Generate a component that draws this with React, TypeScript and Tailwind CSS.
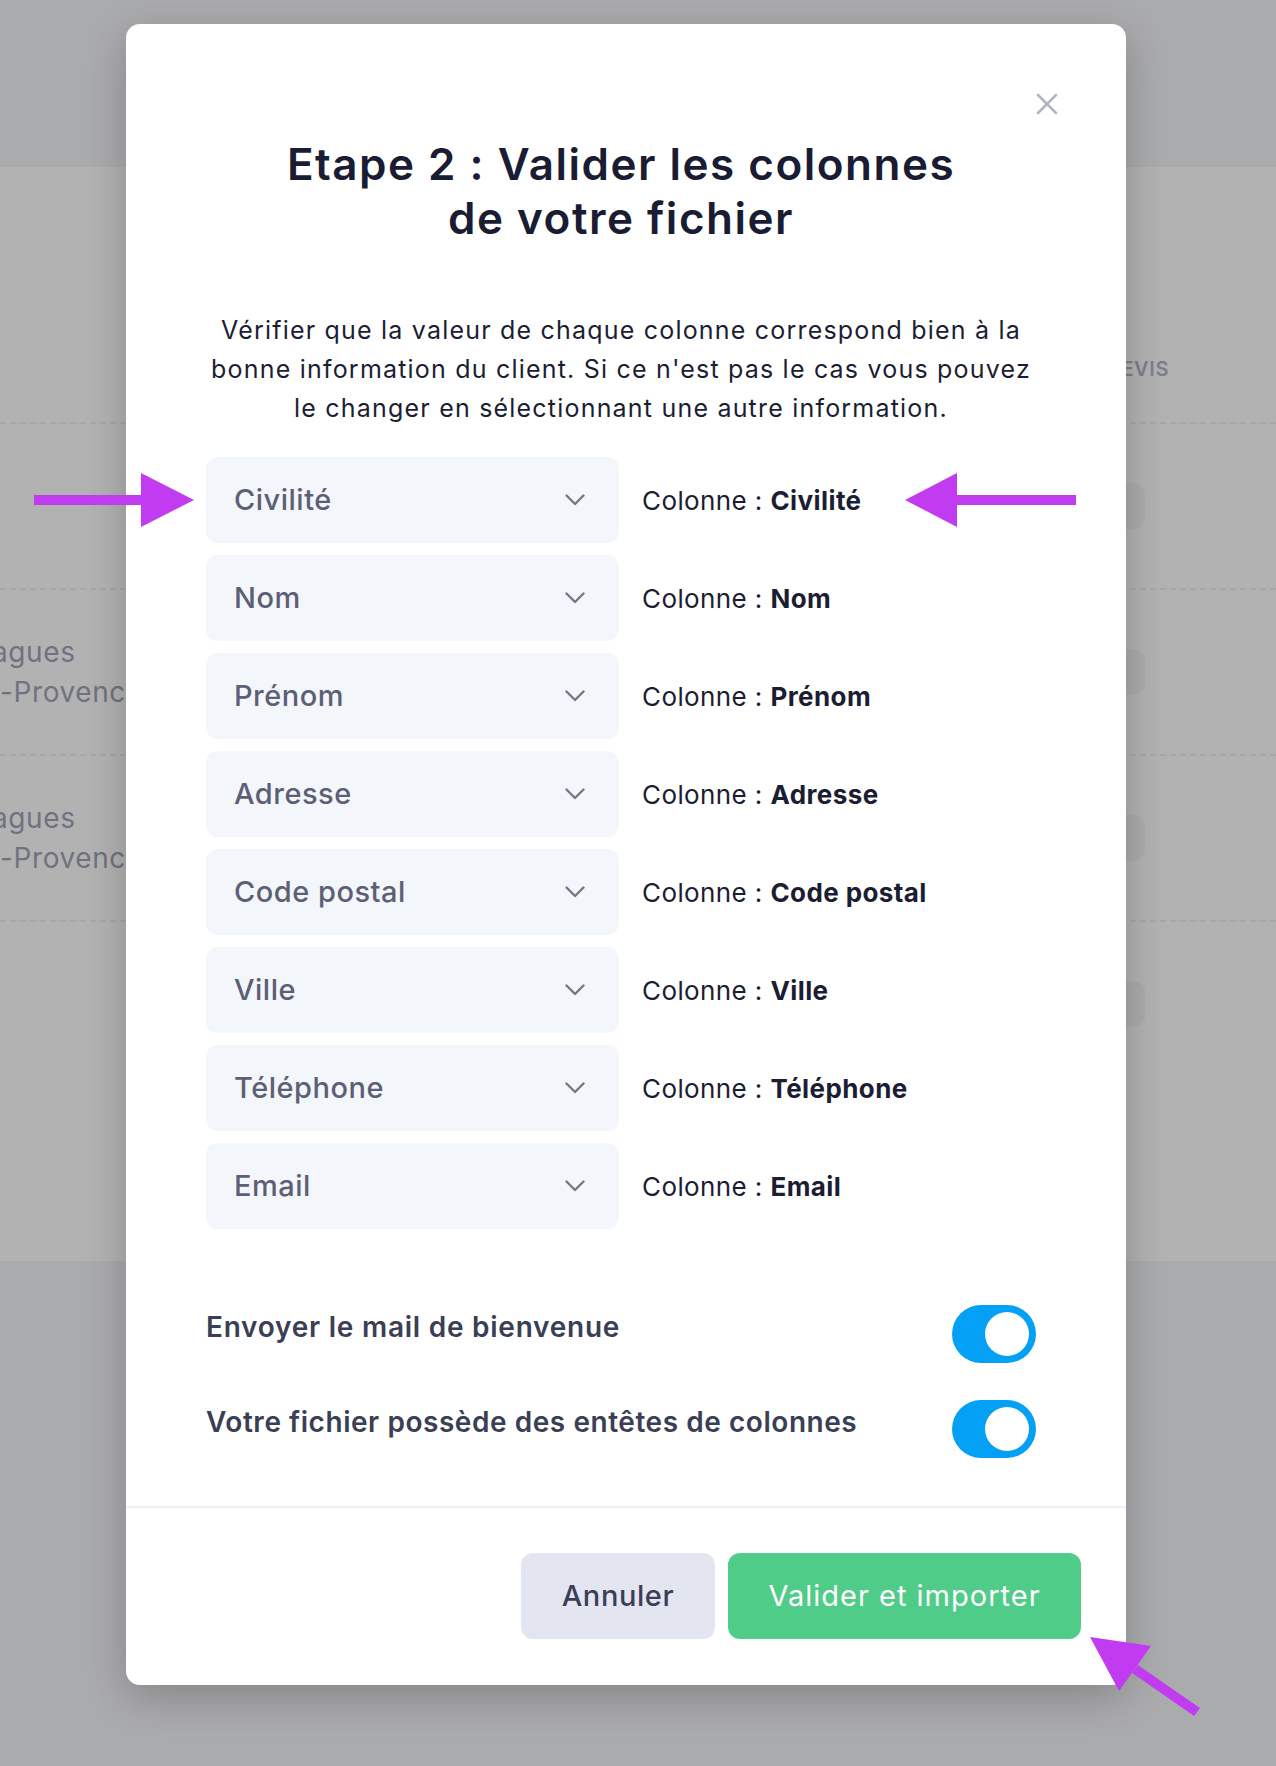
import React from "react";

const FONT = { fontFamily: "Inter, 'Noto Sans', 'DejaVu Sans', sans-serif" };

const fields = [
  "Civilité",
  "Nom",
  "Prénom",
  "Adresse",
  "Code postal",
  "Ville",
  "Téléphone",
  "Email",
];

function Chevron() {
  return (
    <svg width="20" height="12" viewBox="0 0 20 12" fill="none">
      <polyline
        points="1.5,1.5 10,10 18.5,1.5"
        stroke="#74778a"
        strokeWidth="2.4"
        strokeLinecap="round"
        strokeLinejoin="round"
      />
    </svg>
  );
}

function Toggle() {
  return (
    <div className="w-[84px] h-[58px] rounded-full bg-[#03a0f5] flex items-center justify-end pr-[7px] shrink-0">
      <div className="w-[44px] h-[44px] rounded-full bg-white" />
    </div>
  );
}

function FieldRow({ name }: { name: string }) {
  return (
    <div className="flex items-center gap-[23px]">
      <div className="w-[413px] h-[86px] rounded-[12px] bg-[#f3f6fa] pl-[28px] pr-[34px] flex items-center justify-between">
        <span className="text-[29px] tracking-[0.5px] font-medium text-[#5c5f75]">{name}</span>
        <Chevron />
      </div>
      <div className="text-[26px] tracking-[0.4px] text-[#1b1e33]">
        Colonne : <span className="font-bold">{name}</span>
      </div>
    </div>
  );
}

function Background() {
  return (
    <div className="absolute inset-0 flex flex-col">
      <div className="h-[167px] bg-[#aaabad]" />
      <div className="h-[1094px] bg-[#b2b2b2] flex flex-col">
        <div className="h-[255px] flex items-start justify-end pt-[189px] pr-[107px]">
          <span className="text-[20px] leading-[26px] font-semibold text-[#7d7f8c] tracking-[0.6px]">DEVIS</span>
        </div>
        {[0, 1, 2, 3].map((i) => (
          <div
            key={i}
            className="h-[166px] border-t-2 border-dashed border-[#a7a7a9] flex items-center justify-between"
          >
            <div className="text-[28px] leading-[40px] tracking-[0.6px] text-[#70727f] whitespace-nowrap">
              {i === 1 || i === 2 ? (
                <>
                  <div className="-ml-[8px]">agues</div>
                  <div>-Provence</div>
                </>
              ) : null}
            </div>
            <div className="w-[60px] h-[46px] rounded-[12px] bg-[#acacae] mr-[131px]" />
          </div>
        ))}
        <div className="flex-1" />
      </div>
      <div className="flex-1 bg-[#aaabad]" />
    </div>
  );
}

function Arrows() {
  const c = "#c13bf0";
  return (
    <svg
      className="absolute inset-0 pointer-events-none"
      width="1276"
      height="1766"
      viewBox="0 0 1276 1766"
    >
      <rect x="34" y="495" width="110" height="10" fill={c} />
      <polygon points="141,473 194,500 141,527" fill={c} />
      <rect x="955" y="495" width="121" height="10" fill={c} />
      <polygon points="905,500 957,473 957,527" fill={c} />
      <line x1="1135" y1="1669" x2="1197" y2="1712" stroke={c} strokeWidth="10" />
      <polygon points="1090,1637 1151,1646 1119,1691" fill={c} />
    </svg>
  );
}

export default function App() {
  return (
    <div className="relative w-[1276px] h-[1766px] overflow-hidden" style={FONT}>
      <Background />
      <div className="absolute left-[126px] top-[24px] w-[1000px] h-[1661px] bg-white rounded-[14px] shadow-[0_12px_40px_rgba(0,0,0,0.22)] flex flex-col">
        <button className="absolute top-[69px] right-[68px] w-[22px] h-[22px]">
          <svg width="22" height="22" viewBox="0 0 22 22" fill="none">
            <path d="M2 2L20 20M20 2L2 20" stroke="#b3b5c5" strokeWidth="2.6" strokeLinecap="round" />
          </svg>
        </button>
        <div className="pl-[80px] pr-[90px] pt-[113px]">
          <h2 className="text-center text-[44px] leading-[54px] tracking-[1.5px] font-semibold text-[#191c32]">
            Etape 2 : Valider les colonnes
            <br />
            de votre fichier
          </h2>
          <p className="mt-[66px] -mx-[20px] text-center text-[25px] leading-[39px] tracking-[1.2px] text-[#1b1e33] whitespace-nowrap">
            Vérifier que la valeur de chaque colonne correspond bien à la
            <br />
            bonne information du client. Si ce n'est pas le cas vous pouvez
            <br />
            le changer en sélectionnant une autre information.
          </p>
          <div className="mt-[29px] flex flex-col gap-[12px]">
            {fields.map((f) => (
              <FieldRow key={f} name={f} />
            ))}
          </div>
          <div className="mt-[76px] flex flex-col gap-[37px]">
            <div className="flex items-center justify-between">
              <span className="pb-[14px] text-[28px] tracking-[0.75px] font-semibold text-[#3b3f56]">
                Envoyer le mail de bienvenue
              </span>
              <Toggle />
            </div>
            <div className="flex items-center justify-between">
              <span className="pb-[14px] text-[28px] tracking-[0.55px] font-semibold text-[#3b3f56]">
                Votre fichier possède des entêtes de colonnes
              </span>
              <Toggle />
            </div>
          </div>
        </div>
        <div className="mt-[48px] h-[2px] bg-[#eef2f6]" />
        <div className="pt-[45px] pr-[45px] flex justify-end gap-[13px]">
          <button className="w-[194px] h-[86px] rounded-[12px] bg-[#e3e6f0] text-[29px] tracking-[0.6px] font-medium text-[#3b3e56]">
            Annuler
          </button>
          <button className="w-[353px] h-[86px] rounded-[12px] bg-[#50cc89] text-[29px] tracking-[1px] text-white">
            Valider et importer
          </button>
        </div>
      </div>
      <Arrows />
    </div>
  );
}
